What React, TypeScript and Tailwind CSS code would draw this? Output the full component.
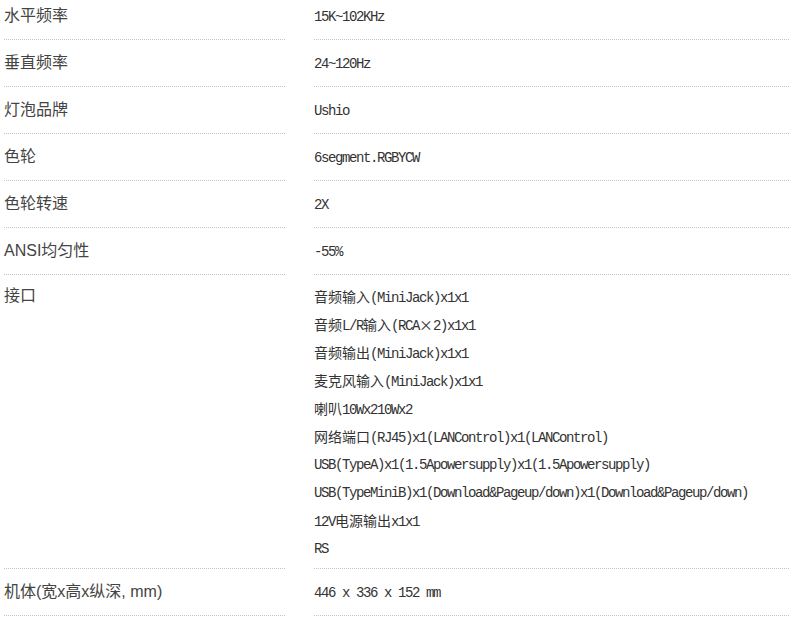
import React from 'react'

type Spec = { label: string; values: string[] }

const specs: Spec[] = [
  { label: '水平频率', values: ['15K~102KHz'] },
  { label: '垂直频率', values: ['24~120Hz'] },
  { label: '灯泡品牌', values: ['Ushio'] },
  { label: '色轮', values: ['6segment.RGBYCW'] },
  { label: '色轮转速', values: ['2X'] },
  { label: 'ANSI均匀性', values: ['-55%'] },
  {
    label: '接口',
    values: [
      '音频输入(MiniJack)x1x1',
      '音频L/R输入(RCA×2)x1x1',
      '音频输出(MiniJack)x1x1',
      '麦克风输入(MiniJack)x1x1',
      '喇叭10Wx210Wx2',
      '网络端口(RJ45)x1(LANControl)x1(LANControl)',
      'USB(TypeA)x1(1.5Apowersupply)x1(1.5Apowersupply)',
      'USB(TypeMiniB)x1(Download&Pageup/down)x1(Download&Pageup/down)',
      '12V电源输出x1x1',
      'RS',
    ],
  },
  { label: '机体(宽x高x纵深, mm)', values: ['446 x 336 x 152 mm'] },
]

// SimSun-like run: half-width ascii, full-width CJK
function SongText({ text }: { text: string }) {
  const parts = text.split(/([\u3000-\u9fff\uff00-\uffef\u00d7]+)/).filter(Boolean)
  return (
    <>
      {parts.map((p, i) =>
        /[\u3000-\u9fff\uff00-\uffef\u00d7]/.test(p) ? (
          <span key={i} className="font-['Noto_Sans_CJK_SC',sans-serif] text-[14px] tracking-normal">
            {p}
          </span>
        ) : (
          <span key={i} className="font-['Liberation_Mono',monospace] text-[14px] tracking-[-1.4px] whitespace-pre">
            {p}
          </span>
        ),
      )}
    </>
  )
}

function SpecRow({ spec }: { spec: Spec }) {
  const multi = spec.values.length > 1
  return (
    <div className={multi ? 'flex items-start' : 'flex items-stretch'}>
      <div
        className={
          'w-[281px] shrink-0 border-b border-dotted border-[#c4c4c4] text-[16px] leading-[28px] text-[#444] ' +
          (multi ? 'self-stretch pt-[7px] pb-[6px]' : 'flex items-center h-[47px]')
        }
      >
        {spec.label}
      </div>
      <div
        className={
          'ml-[29px] flex-1 border-b border-dotted border-[#c4c4c4] leading-[28px] text-[#333] ' +
          (multi ? 'pt-[7px] pb-[6px]' : 'flex items-center h-[47px]')
        }
      >
        {multi ? (
          <div className="flex flex-col">
            {spec.values.map((v) => (
              <div key={v} className="h-[28px] whitespace-nowrap">
                <SongText text={v} />
              </div>
            ))}
          </div>
        ) : (
          <div className="whitespace-nowrap">
            <SongText text={spec.values[0]} />
          </div>
        )}
      </div>
    </div>
  )
}

export default function App() {
  return (
    <div className="h-[622px] w-[789px] overflow-hidden bg-white font-['Liberation_Sans','Noto_Sans_CJK_SC',sans-serif]">
      <div className="-mt-[7px] pl-[4px]">
        {specs.map((s) => (
          <SpecRow key={s.label} spec={s} />
        ))}
      </div>
    </div>
  )
}
